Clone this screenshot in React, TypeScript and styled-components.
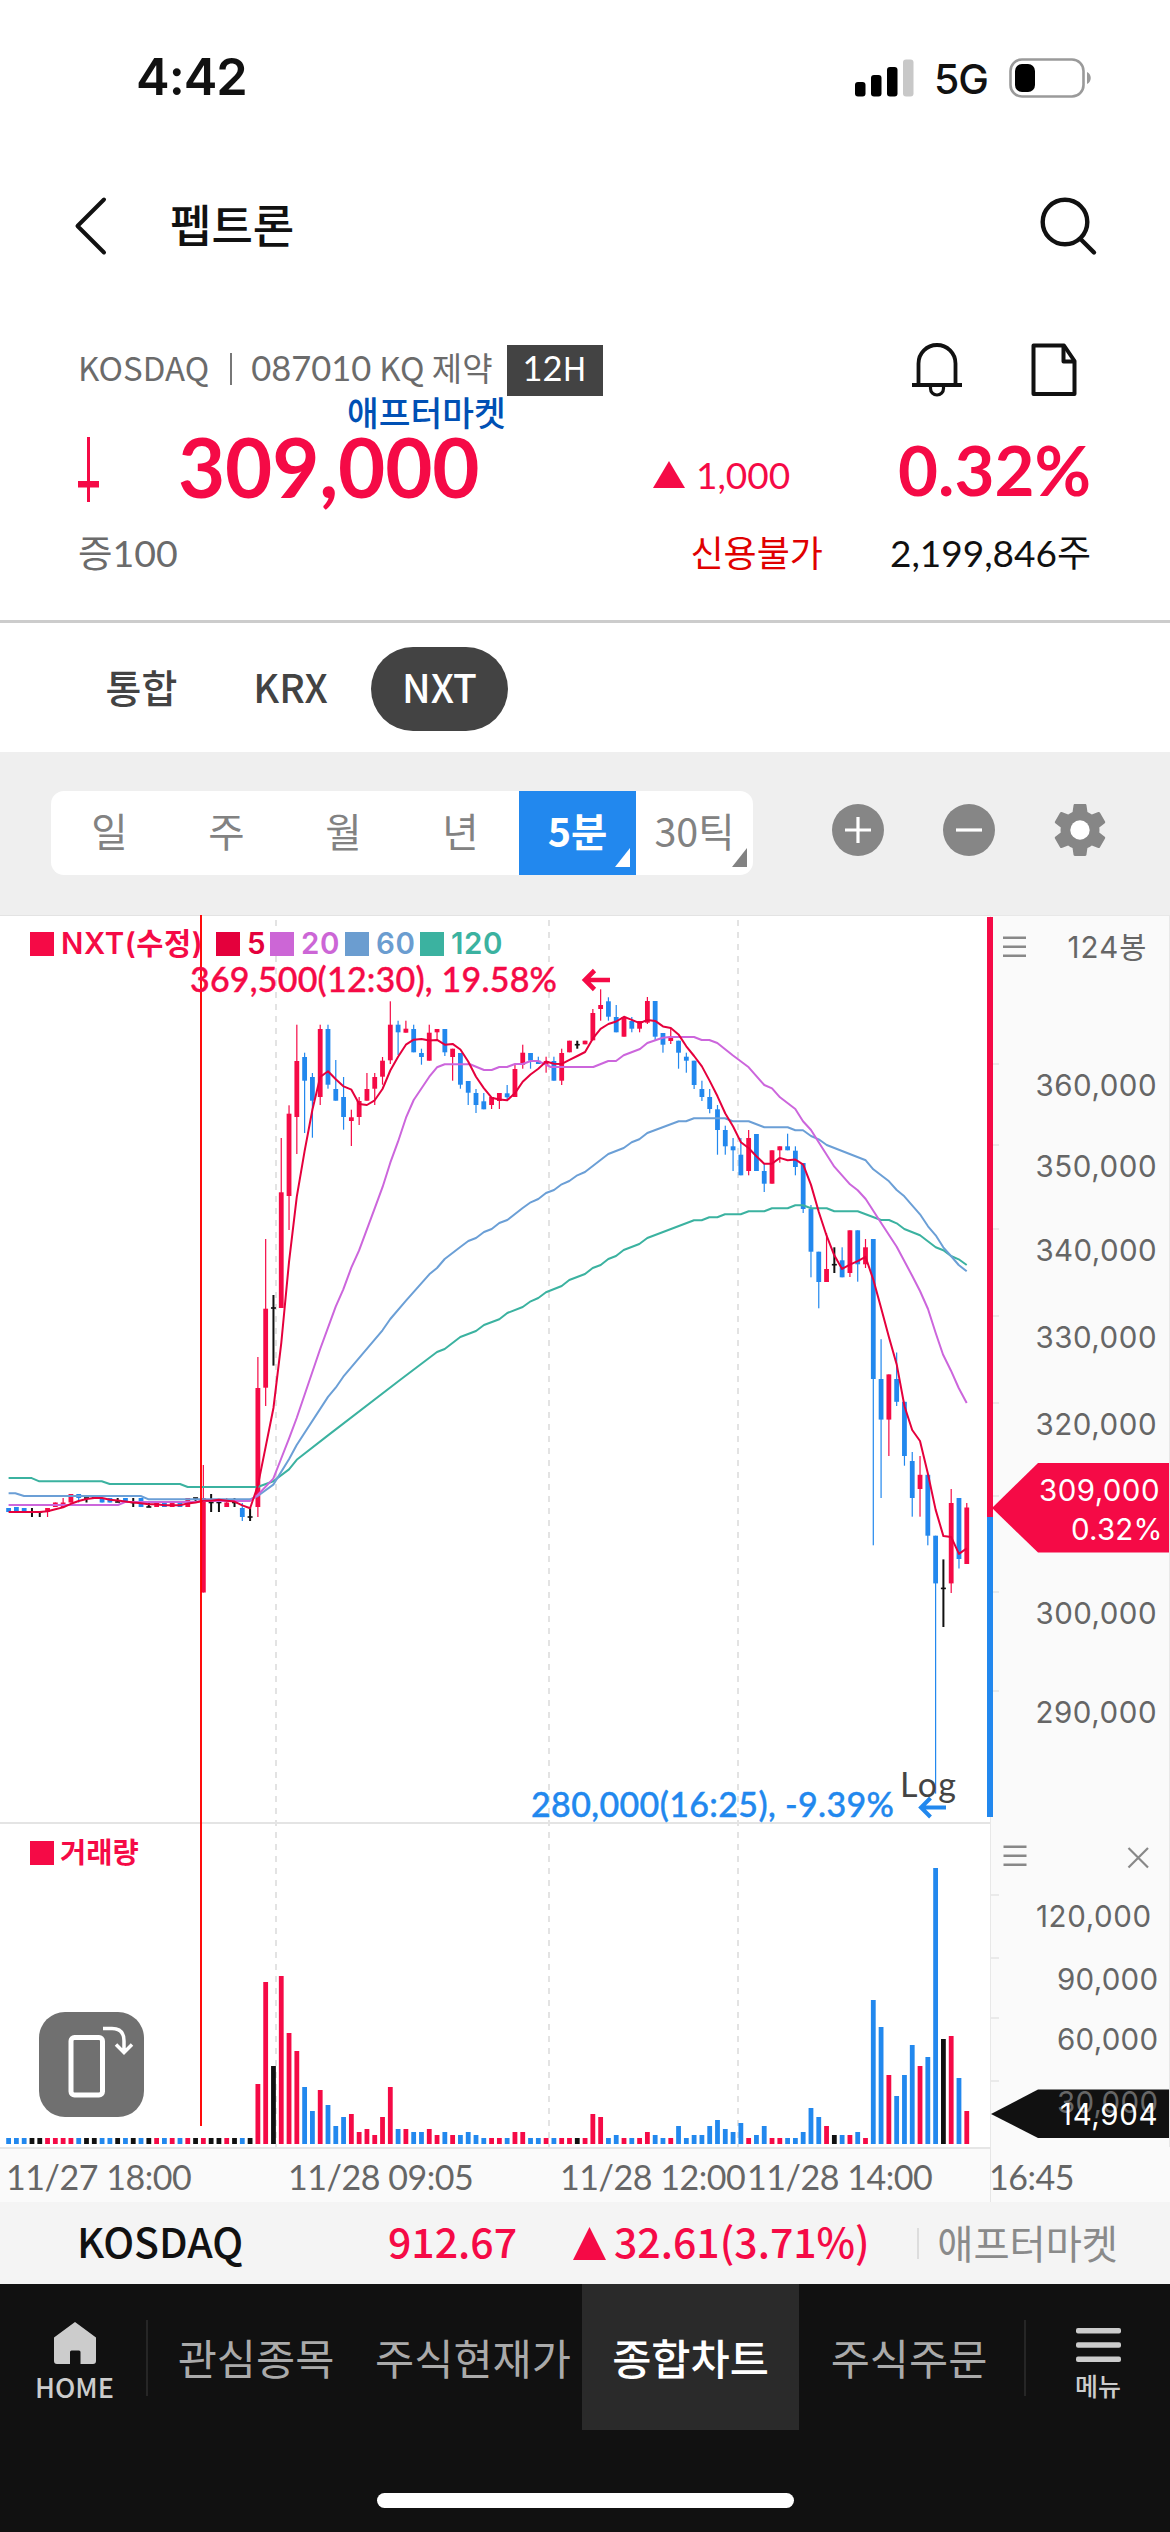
import React from "react";
import styled, { createGlobalStyle } from "styled-components";

const RED = "#f50a46";
const BLUE = "#2288ee";
const BLACK = "#111111";
const LATO = `Lato, "Noto Sans CJK KR", sans-serif`;
const NOTO = `"Noto Sans CJK KR", sans-serif`;
const INTER = `Inter, "Noto Sans CJK KR", sans-serif`;

const GlobalStyle = createGlobalStyle`
  * { box-sizing: border-box; }
  html, body { margin: 0; padding: 0; background: #fff; }
  body { font-family: ${LATO}; color: #111; line-height: 1; width: 1170px; }
  svg { display: block; flex: none; }
`;

const Screen = styled.div`
  width: 1170px;
  height: 2532px;
  display: flex;
  flex-direction: column;
  overflow: hidden;
  background: #fff;
  white-space: nowrap;
`;

/* ---------- status bar ---------- */
const StatusBar = styled.div`
  height: 155px;
  flex: none;
  display: flex;
  align-items: center;
  padding: 0 78px 0 136px;
  font-family: ${INTER};
`;
const Clock = styled.span`
  font-size: 50.5px;
  font-weight: 600;
  letter-spacing: -1px;
  flex: 1;
`;
const Network = styled.span`
  font-size: 41px;
  font-weight: 500;
  margin: 4px 21px 0 20px;
  letter-spacing: -1px;
`;

/* ---------- title bar ---------- */
const TitleBar = styled.div`
  height: 142px;
  flex: none;
  display: flex;
  align-items: center;
  padding: 0 71px 0 71px;
`;
const Title = styled.h1`
  margin: 0 0 0 59px;
  font-size: 45px;
  font-weight: 500;
  flex: 1;
`;

/* ---------- quote ---------- */
const Quote = styled.section`
  height: 326px;
  flex: none;
  padding: 46px 79px 0 78px;
  border-bottom: 3px solid #cccccc;
`;
const InfoRow = styled.div`
  height: 58px;
  display: flex;
  align-items: center;
  padding-bottom: 4px;
`;
const InfoText = styled.div<{ $light?: boolean }>`
  display: flex;
  align-items: baseline;
  font-size: 34.5px;
  padding-bottom: 3px;
  color: ${(p) => (p.$light ? "#fff" : "#6b6b6b")};
`;
const Latin = styled.span<{ $gap?: number }>`
  font-family: ${NOTO};
  font-size: 33px;
  margin-left: ${(p) => p.$gap ?? 0}px;
`;
const InfoBar = styled.i`
  width: 2px;
  height: 32px;
  background: #777;
  margin: 0 19px 0 21px;
  align-self: center;
`;
const SessionBadge = styled.span`
  width: 96px;
  height: 51px;
  margin-left: 14px;
  background: #434343;
  display: flex;
  align-items: center;
  justify-content: center;
`;
const InfoIcons = styled.div`
  display: flex;
  gap: 69px;
  margin-left: auto;
  padding-right: 14px;
`;
const MarketLabel = styled.div`
  height: 27px;
  padding-left: 269px;
  font-size: 34.5px;
  font-weight: 500;
  color: #0050b4;
  line-height: 23px;
`;
const PriceRow = styled.div`
  height: 82px;
  display: flex;
  align-items: center;
`;
const Price = styled.span`
  width: 471px;
  padding-left: 79px;
  padding-bottom: 5px;
  font-size: 81.5px;
  font-weight: 700;
  color: ${RED};
  letter-spacing: -0.2px;
`;
const Change = styled.span`
  flex: 1;
  display: flex;
  align-items: center;
  gap: 11px;
  font-size: 37px;
  color: ${RED};
  padding-top: 11px;
  padding-left: 83px;
`;
const ChangeRate = styled.span`
  font-size: 69px;
  font-weight: 700;
  color: ${RED};
`;
const DetailRow = styled.div`
  display: flex;
  align-items: center;
  height: 85px;
  font-size: 37px;
`;
const Margin = styled.span`
  color: #6b6b6b;
  flex: 1;
  font-size: 37.5px;
`;
const Credit = styled.span`
  color: #e00000;
  margin-right: 67px;
  font-size: 36px;
`;

/* ---------- exchange tabs ---------- */
const ExchangeTabs = styled.div`
  height: 129px;
  flex: none;
  display: flex;
  align-items: center;
  padding: 3px 0 0 73px;
`;
const ExchangeTab = styled.span<{ $w: number; $on?: boolean }>`
  width: ${(p) => p.$w}px;
  height: 84px;
  padding-bottom: 6px;
  border-radius: 42px;
  display: flex;
  align-items: center;
  justify-content: center;
  font-family: ${NOTO};
  font-size: 39px;
  font-weight: 500;
  background: ${(p) => (p.$on ? "#434343" : "transparent")};
  color: ${(p) => (p.$on ? "#fff" : "#434343")};
`;

/* ---------- period toolbar ---------- */
const PeriodBar = styled.div`
  height: 163px;
  flex: none;
  display: flex;
  align-items: center;
  background: #efefef;
  padding-left: 51px;
`;
const Periods = styled.div`
  display: flex;
  height: 84px;
  width: 702px;
  margin-bottom: 1px;
  border-radius: 13px;
  background: #fff;
  overflow: hidden;
`;
const Period = styled.span<{ $on?: boolean }>`
  position: relative;
  width: 117px;
  padding-bottom: 7px;
  display: flex;
  align-items: center;
  justify-content: center;
  font-family: ${NOTO};
  font-size: 39.5px;
  font-weight: ${(p) => (p.$on ? 700 : 400)};
  background: ${(p) => (p.$on ? BLUE : "transparent")};
  color: ${(p) => (p.$on ? "#fff" : "#828282")};
`;
const Corner = styled.i<{ $on?: boolean }>`
  position: absolute;
  right: 6px;
  bottom: 8px;
  border-style: solid;
  border-width: 0 0 19px 15px;
  border-color: transparent transparent ${(p) => (p.$on ? "#fff" : "#828282")} transparent;
`;
const Tools = styled.div`
  display: flex;
  align-items: center;
  gap: 58.5px;
  margin-left: 79px;
  padding-bottom: 7px;
`;

/* ---------- chart ---------- */
const ChartGrid = styled.div`
  position: relative;
  display: grid;
  grid-template-columns: 990px 180px;
  grid-template-rows: 1232px 55px;
  flex: none;
`;
const AxisCell = styled.div`
  background: #fafafa;
`;
const TimeCell = styled.div<{ $edge?: boolean }>`
  background: #fafafa;
  border-top: ${(p) => (p.$edge ? "none" : "2px solid #e6e6e6")};
  border-left: ${(p) => (p.$edge ? "1px solid #e6e6e6" : "none")};
  display: flex;
  padding-top: ${(p) => (p.$edge ? 13 : 11)}px;
  padding-left: ${(p) => (p.$edge ? 0 : 6)}px;
  font-size: 34px;
  color: #666;
`;
const TimeLabel = styled.span<{ $w?: number }>`
  width: ${(p) => (p.$w ? p.$w + "px" : "auto")};
  letter-spacing: -0.45px;
  margin-left: ${(p) => (p.$w ? 0 : -2)}px;
`;
const Legend = styled.div<{ $top: number; $size?: number }>`
  position: absolute;
  left: 30px;
  top: ${(p) => p.$top}px;
  height: 28px;
  display: flex;
  align-items: center;
  font-family: ${INTER};
  font-size: ${(p) => p.$size ?? 29.5}px;
  font-weight: 600;
  letter-spacing: ${(p) => (p.$size ? 0 : 0.6)}px;
`;
const LegendItem = styled.span<{ $color: string; $w: number; $gap?: number }>`
  display: flex;
  align-items: center;
  width: ${(p) => p.$w}px;
  color: ${(p) => p.$color};
  &::before {
    content: "";
    width: 24px;
    height: 24px;
    margin-right: ${(p) => p.$gap ?? 7}px;
    background: ${(p) => p.$color};
    flex: none;
  }
`;
const RotateButton = styled.div`
  position: absolute;
  left: 39px;
  top: 1097px;
  width: 105px;
  height: 105px;
  border-radius: 26px;
  background: #707070;
`;

/* ---------- index ticker ---------- */
const Ticker = styled.div`
  height: 82px;
  flex: none;
  display: flex;
  align-items: center;
  background: #f4f4f4;
  padding-left: 77px;
  font-family: ${NOTO};
  font-size: 41px;
  font-weight: 500;
`;
const TickerName = styled.span`
  width: 311px;
  padding-bottom: 6px;
`;
const TickerValue = styled.span<{ $w?: number; $gap?: number }>`
  width: ${(p) => (p.$w ? p.$w + "px" : "auto")};
  margin-left: ${(p) => p.$gap ?? 0}px;
  padding-bottom: 6px;
  color: ${RED};
`;
const TickerSession = styled.span`
  margin-left: auto;
  margin-right: 52px;
  padding-left: 18px;
  border-left: 2px solid #dddddd;
  height: 31px;
  line-height: 31px;
  font-family: ${LATO};
  font-size: 39.3px;
  font-weight: 400;
  color: #8a8a8a;
`;

/* ---------- bottom navigation ---------- */
const BottomNav = styled.nav`
  height: 248px;
  flex: none;
  background: #111;
  display: flex;
  flex-direction: column;
  align-items: center;
`;
const NavRow = styled.div`
  width: 1170px;
  height: 146px;
  display: flex;
  align-items: stretch;
`;
const NavSide = styled.div<{ $w: number; $size: number; $shift?: number }>`
  width: ${(p) => p.$w}px;
  display: flex;
  flex-direction: column;
  align-items: center;
  justify-content: flex-start;
  padding-top: 38px;
  padding-left: ${(p) => p.$shift ?? 0}px;
  gap: 9px;
  font-family: ${NOTO};
  font-size: ${(p) => p.$size}px;
  font-weight: 500;
  color: #cccccc;
`;
const NavRule = styled.i<{ $gap?: number }>`
  width: 2px;
  height: 76px;
  margin-top: 36px;
  margin-left: ${(p) => p.$gap ?? 0}px;
  background: #262626;
`;
const NavItem = styled.span<{ $w: number; $on?: boolean }>`
  width: ${(p) => p.$w}px;
  display: flex;
  align-items: center;
  justify-content: center;
  padding-top: 5px;
  font-size: 42.6px;
  font-weight: ${(p) => (p.$on ? 500 : 400)};
  color: ${(p) => (p.$on ? "#fff" : "#aaaaaa")};
  background: ${(p) => (p.$on ? "#2a2a2a" : "transparent")};
`;
const HomeIndicator = styled.i`
  width: 417px;
  height: 15px;
  margin-top: 63px;
  border-radius: 8px;
  background: #fff;
`;

/* ---------- chart data ---------- */
// kind, high, body top, body bottom, low (chart coordinates), volume height
type Bar = [string, number, number, number, number, number];
const bars: Bar[] = [
  ["b", 1508, 1508, 1512, 1512, 6], ["b", 1507, 1507, 1512, 1512, 6], ["b", 1508, 1508, 1512, 1512, 6],
  ["k", 1508, 1512, 1512, 1517, 6], ["k", 1512, 1512, 1512, 1517, 6], ["r", 1508, 1508, 1512, 1517, 6],
  ["r", 1502.5, 1502.5, 1507, 1507, 6], ["r", 1498, 1502.5, 1507, 1507, 6], ["r", 1494, 1494, 1502.5, 1502.5, 6],
  ["b", 1494, 1494, 1498, 1502.5, 6], ["k", 1498, 1498, 1498, 1502.5, 6], ["k", 1498, 1498, 1498, 1498, 6],
  ["b", 1498, 1498, 1502.5, 1502.5, 6], ["b", 1498, 1498, 1502.5, 1502.5, 6], ["k", 1498, 1502, 1502, 1502, 6],
  ["b", 1498, 1498, 1502.5, 1502.5, 6], ["k", 1498, 1502.5, 1502.5, 1507, 6], ["b", 1498, 1498, 1507, 1507, 6],
  ["k", 1502.5, 1507, 1507, 1507, 6], ["r", 1502.5, 1502.5, 1507, 1507, 6], ["b", 1502.5, 1502.5, 1507, 1507, 6],
  ["r", 1502.5, 1502.5, 1507, 1507, 6], ["b", 1502.5, 1502.5, 1507, 1507, 6], ["r", 1498, 1498, 1507, 1507, 6],
  ["k", 1498, 1498, 1498, 1502.5, 6], ["r", 1465, 1498, 1592.5, 1592.5, 6], ["k", 1494, 1502.5, 1502.5, 1512, 6],
  ["k", 1502.5, 1502.5, 1502.5, 1512, 6], ["r", 1498, 1502.5, 1507, 1507, 6], ["k", 1498, 1502.5, 1502.5, 1507, 6],
  ["b", 1503, 1508, 1517, 1521, 6], ["k", 1508, 1517, 1517, 1521, 6], ["r", 1357, 1388, 1507, 1517, 60],
  ["r", 1239, 1308.7, 1387.7, 1406, 162], ["k", 1295, 1308, 1308, 1365.6, 78], ["r", 1138, 1192.3, 1308, 1308, 168],
  ["r", 1105.3, 1113.7, 1196, 1230, 111], ["r", 1024.7, 1061, 1117, 1154, 93], ["b", 1052.7, 1057, 1080.7, 1133, 57],
  ["b", 1073, 1077, 1100.7, 1137.7, 33], ["r", 1024.7, 1029, 1097, 1105, 54], ["b", 1024.7, 1029, 1084.7, 1088.7, 39],
  ["b", 1060, 1089, 1100.7, 1100.7, 18], ["b", 1077, 1097, 1117, 1129.7, 27], ["r", 1109.7, 1117.3, 1121, 1146, 30],
  ["r", 1097, 1101, 1117, 1125, 12], ["r", 1073, 1089, 1100.7, 1100.7, 15], ["r", 1073, 1077, 1088.7, 1105, 9],
  ["r", 1057, 1060.7, 1076.7, 1084.7, 27], ["r", 1001.3, 1024.7, 1060.3, 1064, 57], ["b", 1020.7, 1024.7, 1032.3, 1055, 15],
  ["r", 1020.7, 1028.7, 1032.7, 1032.7, 15], ["b", 1024.7, 1029, 1052.3, 1052.3, 12], ["b", 1048.7, 1053, 1057, 1064.7, 12],
  ["r", 1024.7, 1032.7, 1060.7, 1060.7, 15], ["r", 1029, 1029, 1032.3, 1040.7, 9], ["b", 1029, 1029, 1052.3, 1056, 12],
  ["r", 1048.7, 1048.7, 1057, 1080.7, 9], ["b", 1053, 1053, 1084.7, 1088.7, 9], ["b", 1081, 1081, 1092.7, 1105, 12],
  ["b", 1089, 1093, 1105, 1113, 9], ["b", 1093, 1101.3, 1109.3, 1109.3, 6], ["r", 1097, 1097, 1105, 1109, 6],
  ["r", 1093, 1093, 1101, 1109, 6], ["b", 1085, 1093.3, 1097.3, 1100, 6], ["r", 1065, 1069, 1097, 1097, 12],
  ["r", 1044.7, 1052.7, 1064.7, 1068.7, 12], ["b", 1053, 1053, 1060.7, 1068.7, 6], ["b", 1056.7, 1060.7, 1064, 1064, 6],
  ["r", 1056.7, 1061, 1064.7, 1072.7, 6], ["b", 1056.7, 1061, 1080.7, 1080.7, 6], ["r", 1048.7, 1053, 1080.7, 1085, 6],
  ["r", 1040.7, 1040.7, 1052.3, 1052.3, 6], ["k", 1040.7, 1044.7, 1044.7, 1048.7, 6], ["r", 1040.7, 1040.7, 1044.3, 1044.3, 6],
  ["r", 1009, 1013, 1040.3, 1040.3, 30], ["r", 989.3, 1005, 1009, 1020.7, 27], ["b", 997.3, 1001.3, 1016.7, 1020.7, 6],
  ["b", 1005, 1017, 1032.3, 1032.3, 9], ["r", 1017, 1017, 1036.7, 1036.7, 6], ["b", 1017, 1021, 1028.7, 1032.3, 6],
  ["r", 1021, 1021, 1028.7, 1032.3, 6], ["r", 997, 1001, 1022.7, 1024, 12], ["b", 1001, 1001, 1036.7, 1040.7, 9],
  ["b", 1033, 1033, 1044.7, 1052.7, 6], ["r", 1029, 1036.7, 1041, 1044, 6], ["b", 1040.7, 1040.7, 1052.7, 1068.7, 18],
  ["b", 1052.7, 1056.7, 1060.7, 1072.7, 6], ["b", 1060.7, 1060.7, 1085, 1089, 9], ["b", 1080.7, 1089, 1097, 1101, 9],
  ["b", 1089, 1097, 1109, 1113.3, 18], ["b", 1105, 1109.3, 1130, 1154.7, 24], ["b", 1125.7, 1130, 1146.3, 1154.7, 15],
  ["b", 1138, 1146.3, 1150.3, 1171, 12], ["b", 1138, 1154.7, 1175.3, 1175.3, 21], ["r", 1130, 1138, 1171, 1175.3, 6],
  ["b", 1134, 1134, 1171, 1171, 9], ["b", 1163.3, 1171, 1183.7, 1192, 18], ["r", 1150.3, 1150.3, 1183.7, 1183.7, 6],
  ["r", 1146.3, 1146.3, 1150.3, 1162.7, 6], ["b", 1133.7, 1146.3, 1150.3, 1150.3, 6], ["b", 1146.3, 1150.7, 1167, 1175.3, 6],
  ["b", 1163, 1163, 1209, 1213, 12], ["b", 1205, 1209, 1251.7, 1277.3, 36], ["b", 1251.7, 1251.7, 1282, 1308.3, 27],
  ["r", 1233, 1269, 1282, 1282, 18], ["k", 1247.3, 1264.7, 1264.7, 1273, 9], ["b", 1247.3, 1260.3, 1277.3, 1277.3, 9],
  ["r", 1230.3, 1230.3, 1273, 1277, 9], ["b", 1230.3, 1230.3, 1264.3, 1281.7, 12], ["r", 1239, 1247.3, 1264.3, 1268, 6],
  ["b", 1239, 1239, 1379, 1545.3, 144], ["b", 1339.2, 1379, 1419.6, 1498, 117], ["r", 1374.4, 1374.4, 1419.6, 1456, 69],
  ["b", 1352.5, 1379, 1401.8, 1406, 48], ["b", 1401.8, 1401.8, 1456, 1465.7, 69], ["b", 1452, 1461, 1498, 1516.7, 99],
  ["r", 1456, 1474.8, 1489, 1516.7, 78], ["b", 1474.8, 1474.8, 1535.7, 1545.3, 87], ["b", 1535.7, 1535.7, 1583.4, 1793.6, 276],
  ["k", 1559.4, 1588.4, 1588.4, 1627, 105], ["r", 1489, 1503, 1583.4, 1593, 108], ["b", 1498, 1498, 1559, 1568.5, 66],
  ["r", 1503, 1507.5, 1564, 1564, 33],
];
const ink: Record<string, string> = { r: RED, b: BLUE, k: BLACK };
const barX = (i: number) => 8.6 + i * 7.79;

const closes = bars.map((b) => (b[0] === "b" ? b[3] : b[2]));
const ma5 = closes
  .map((_, i) => {
    const part = closes.slice(Math.max(0, i - 4), i + 1);
    return `${barX(i).toFixed(1)},${(part.reduce((a, c) => a + c, 0) / part.length).toFixed(1)}`;
  })
  .join(" ");
const ma20 =
  "8.6,1505 118,1505 125,1502 195,1502 203,1501 250,1501 257.7,1495 273.3,1478.6 281,1459 289,1438.6 296.7,1418 312,1373 320,1349.5 335.7,1306.7 343.3,1289.3 351.3,1267.7 359,1250.7 374.7,1208.3 382.7,1186.7 390.3,1162.7 398,1141.7 406,1117.7 413.7,1100 429.3,1076.7 437,1067.3 444.7,1064.3 470,1064.3 484,1070 491.7,1070 499.3,1067 507,1067 515,1064 522.7,1064 530.7,1061 538,1061 546,1064.7 550.7,1067 593.3,1067 608.3,1061 616,1061 623.7,1055.3 640,1049 647.3,1043 662.7,1037.7 670,1037 694,1037 701.7,1040 709.3,1040 717.3,1043 732.7,1055.3 748.7,1067.3 764.3,1085 772,1088.3 780,1097.3 795.3,1109 803,1121.3 811,1130 818.7,1142.3 834.3,1166.7 850,1184.3 857.7,1190.3 865.7,1199 881,1222.7 896.7,1246.7 912.3,1276 920,1291 928,1309 935.7,1333 943,1354.5 951,1370.7 958.7,1388 966.7,1403";
const ma60 =
  "8.6,1493.3 15.3,1493.3 24,1496 140.7,1496 148.7,1499.3 250,1499.3 257.7,1496 273.3,1484.6 289,1459.3 296.7,1445 328,1396.9 335.7,1387.7 343.3,1376.7 382.5,1330.3 390.3,1319 406,1300.7 429.3,1274.3 437,1268 444.7,1259 460.3,1247 468.3,1241 476,1238 484,1232 491.7,1229 499.3,1223 507.3,1220 522.7,1208 530.7,1202.3 538.3,1199 546,1193 554,1190 561.7,1184.3 569.3,1181 577.3,1175.3 585,1172 608.3,1154 623.7,1148 631.7,1142.3 639.3,1139.3 647.3,1133 678.7,1121.3 686,1121.3 694,1118.3 725,1118.3 732.7,1121.3 748.7,1121.3 764.3,1127.3 787.7,1127.3 795.3,1130.3 803,1130.3 811,1136 818.7,1139.3 826.7,1145 865.7,1160.3 873.3,1169.3 889,1181.3 896.7,1190 904.3,1196.3 920,1214.3 928,1226.3 935.7,1235.3 943.3,1247.3 951,1256 958.7,1265 966.7,1271.3";
const ma120 =
  "8.6,1478.1 31.7,1478.1 39.3,1481.3 101.7,1481.3 109.7,1484 180,1484 187.7,1487 257.7,1487 273.3,1481.3 289,1469.4 296.7,1459.8 328,1435.4 400,1380 437,1352 444.7,1349 460.3,1337 476,1331 484,1325 499.3,1319.3 507.3,1313 522.7,1307 530.7,1301.3 538.3,1298 546,1292.3 561.7,1286 569.3,1280 585,1274 592.7,1268 600.7,1265 608.3,1259 616,1256 623.7,1250 639.3,1244 647.3,1238 694,1220.3 701.7,1220.3 709.3,1217.3 717.3,1217.3 725,1214.3 740.7,1214.3 748.7,1211.3 764.3,1211.3 772,1208.3 787.7,1208.3 795.3,1205.3 803,1205.3 811,1208.3 826.7,1208.3 834.3,1211.3 857.7,1211.3 881,1220 889,1220 896.7,1223.3 904.3,1229 920,1235.3 935.7,1247.3 943.3,1250.3 951,1256 958.7,1259.3 966.7,1265";

const priceTicks: [number, string][] = [
  [1064, "360,000"], [1145, "350,000"], [1229, "340,000"], [1316, "330,000"],
  [1403, "320,000"], [1496, ""], [1592, "300,000"], [1691, "290,000"],
];
const volumeTicks: [number, string, number, number][] = [
  [1895, "120,000", 1036, 114], [1958, "90,000", 1057, 100], [2018, "60,000", 1057, 100], [2081, "30,000", 1057, 100],
];

/* ---------- icons ---------- */
const SignalIcon = () => (
  <svg width="59" height="38" viewBox="0 0 59 38">
    <rect x="0" y="23" width="10.5" height="14.5" rx="3" />
    <rect x="16" y="16" width="10.5" height="21.5" rx="3" />
    <rect x="32" y="8" width="10.5" height="29.5" rx="3" />
    <rect x="48" y="0.5" width="10.5" height="37" rx="3" fill="#c8c8c8" />
  </svg>
);
const BatteryIcon = () => (
  <svg width="83" height="40" viewBox="0 0 83 40">
    <rect x="1.5" y="1.5" width="73" height="37" rx="11.5" fill="none" stroke="#9a9a9a" strokeWidth="2.6" />
    <rect x="6" y="6" width="20" height="28" rx="7" />
    <path d="M78 14c5 2 5 10 0 12z" fill="#9a9a9a" />
  </svg>
);
const BackIcon = () => (
  <svg width="40" height="60" viewBox="0 0 40 60" fill="none" stroke="#111" strokeWidth="4" strokeLinecap="round" strokeLinejoin="round">
    <path d="M33 3.500L6.500 30L33 56.500" />
  </svg>
);
const SearchIcon = () => (
  <svg width="60" height="62" viewBox="0 0 60 62" fill="none" stroke="#111" strokeWidth="4.4" strokeLinecap="round">
    <circle cx="26" cy="27" r="22.3" />
    <path d="M41.5 44L55 57.5" />
  </svg>
);
const BellIcon = () => (
  <svg width="50" height="54" viewBox="0 0 50 54" fill="none" stroke="#111" strokeWidth="3.8">
    <path d="M6.5 41V20.5a18.5 18.5 0 0 1 37 0V41" />
    <path d="M0 42h50" strokeWidth="4" />
    <path d="M18.5 43v2.500a6.500 6.500 0 0 0 13 0V43" strokeWidth="3.2" />
  </svg>
);
const NoteIcon = () => (
  <svg width="46" height="54" viewBox="0 0 46 54" fill="none" stroke="#111" strokeWidth="4" strokeLinejoin="round">
    <path d="M2.500 2.500H33L43.500 18V51H2.500z" />
    <path d="M32.500 3V18.500H43.500" />
  </svg>
);
const CandleIcon = () => (
  <svg width="21" height="65" viewBox="0 0 21 65" fill={RED}>
    <rect x="9" width="3" height="65" />
    <rect y="44" width="21" height="6.500" />
  </svg>
);
const UpIcon = ({ w, h }: { w: number; h: number }) => (
  <svg width={w} height={h} viewBox="0 0 32 27" preserveAspectRatio="none">
    <path d="M16 0L32 27H0z" fill={RED} />
  </svg>
);
const ZoomIcon = ({ plus }: { plus?: boolean }) => (
  <svg width="52" height="52" viewBox="0 0 52 52">
    <circle cx="26" cy="26" r="26" fill="#868686" />
    <path d={plus ? "M13 26H39M26 13V39" : "M13 26H39"} stroke="#fff" strokeWidth="3.2" />
  </svg>
);
const GearIcon = () => (
  <svg width="54" height="54" viewBox="2.200 2 19.600 20" fill="#868686">
    <path d="M19.140 12.940c.040-.300.060-.610.060-.940 0-.320-.020-.640-.070-.940l2.030-1.580c.180-.140.230-.410.120-.610l-1.920-3.320c-.120-.220-.370-.290-.590-.220l-2.390.960c-.500-.380-1.030-.700-1.620-.940L14.400 2.810c-.040-.240-.240-.410-.480-.410h-3.840c-.240 0-.430.170-.470.410L9.250 5.350C8.660 5.590 8.120 5.920 7.630 6.290L5.240 5.330c-.220-.080-.470 0-.590.220L2.740 8.870C2.620 9.080 2.660 9.340 2.860 9.480l2.030 1.580C4.840 11.360 4.800 11.690 4.800 12s.020.640.070.940l-2.030 1.580c-.180.140-.230.410-.120.610l1.920 3.320c.120.220.370.290.590.220l2.390-.960c.500.380 1.030.700 1.620.940l.360 2.540c.050.240.240.410.480.410h3.840c.240 0 .440-.170.470-.410l.360-2.540c.590-.240 1.130-.560 1.620-.940l2.390.960c.220.080.470 0 .590-.220l1.920-3.320c.120-.220.070-.470-.120-.610z" />
    <circle cx="12" cy="12" r="3.600" fill="#fff" />
  </svg>
);
const RotateIcon = () => (
  <svg width="105" height="105" viewBox="39 2012 105 105" fill="none" stroke="#fff">
    <rect x="71" y="2037.500" width="31.500" height="57.500" rx="3.500" strokeWidth="5" />
    <path d="M103 2028.500H112C120 2028.500 124 2033 124 2041V2052M116 2044.500L124 2052.500L132 2044.500" strokeWidth="3.500" />
  </svg>
);
const HomeIcon = () => (
  <svg width="42" height="42" viewBox="0 0 42 42" fill="#ccc">
    <path d="M21 0L42 15.500V39a3 3 0 0 1-3 3H26.500V30a1.500 1.500 0 0 0-1.500-1.500H17.500A1.500 1.500 0 0 0 16 30V42H3a3 3 0 0 1-3-3V15.500z" />
  </svg>
);
const MenuIcon = () => (
  <svg width="45" height="42" viewBox="0 0 45 42" fill="#ccc">
    <rect y="6" width="45" height="5.500" rx="2" />
    <rect y="20.300" width="45" height="5.500" rx="2" />
    <rect y="34.600" width="45" height="5.500" rx="2" />
  </svg>
);

/* ---------- chart drawing ---------- */
const Plot = () => (
  <svg width="990" height="1232" viewBox="0 915 990 1232">
    <path d="M0 915.500H990" stroke="#e3e3e3" strokeWidth="1" />
    <path d="M276 920V2147M549 920V2147M738 920V2147" stroke="#e3e3e3" strokeWidth="2" strokeDasharray="6 6" />
    <path d="M0 1823H990" stroke="#e4e4e4" strokeWidth="2" />
    {bars.map(([kind, high, top, bottom, low, vol], i) => {
      const x = barX(i);
      const doji = top === bottom;
      return (
        <g key={i} fill={ink[kind]}>
          {low > high && <rect x={x - (doji ? 1 : 0.6)} y={high} width={doji ? 2 : 1.2} height={low - high} />}
          {doji ? (
            <rect x={x - 2.5} y={top - 0.8} width={5} height={1.6} />
          ) : (
            <rect x={x - 2.4} y={top} width={4.8} height={bottom - top} />
          )}
          <rect x={x - 2.4} y={2144 - vol} width={4.8} height={vol} />
        </g>
      );
    })}
    <g fill="none" strokeWidth="2" strokeLinejoin="round">
      <polyline points={ma120} stroke="#3bb2a0" />
      <polyline points={ma60} stroke="#6b9fd6" />
      <polyline points={ma20} stroke="#cc66dc" />
      <polyline points={ma5} stroke="#e5003c" />
    </g>
    <path d="M201 915V2126" stroke="#ff0000" strokeWidth="1.900" />
    <g fontFamily={LATO} fontSize="34" fontWeight="500">
      <text x="190" y="991.500" fill={RED} stroke={RED} strokeWidth="0.400" textLength="367">369,500(12:30), 19.58%</text>
      <text x="531" y="1816.500" fill={BLUE} stroke={BLUE} strokeWidth="0.400" textLength="363">280,000(16:25), -9.39%</text>
      <text x="900" y="1796.500" fill="#444" fontWeight="400" textLength="56">Log</text>
    </g>
    <path d="M610 980H586M594.500 970.500L585 980L594.500 989.500" fill="none" stroke={RED} strokeWidth="4.600" />
    <path d="M946 1807.500H922M930.500 1798L921 1807.500L930.500 1817" fill="none" stroke={BLUE} strokeWidth="4" />
    <rect x="987" y="917" width="3" height="600" fill={RED} />
    <rect x="987" y="1517" width="3" height="300" fill={BLUE} />
  </svg>
);
const Axis = () => (
  <svg width="180" height="1232" viewBox="990 915 180 1232" fontFamily={INTER} fontSize="29.500" fill="#666">
    <path d="M990 915.500H1170M1169.500 915V2147M990.500 915V2147" stroke="#e8e8e8" strokeWidth="1" />
    <rect x="990" y="917" width="3" height="600" fill={RED} />
    <rect x="990" y="1517" width="3" height="300" fill={BLUE} />
    {priceTicks.map(([y, label]) => (
      <g key={y}>
        <path d={`M993 ${y}H999`} stroke="#e4e4e4" strokeWidth="1.500" />
        <text x="1035.500" y={y + 32} textLength="121">{label}</text>
      </g>
    ))}
    <path d="M1003 937.700H1026M1003 946.700H1026M1003 955.700H1026" stroke="#888" strokeWidth="2.600" />
    <text x="1067.500" y="958" textLength="79">124봉</text>
    <path d="M1003.500 1846.700H1026.500M1003.500 1855.700H1026.500M1003.500 1864.700H1026.500" stroke="#888" strokeWidth="2.400" />
    <path d="M1128.500 1848L1148 1867.500M1148 1848L1128.500 1867.500" stroke="#888" strokeWidth="2.200" />
    <path d="M992 1508L1038 1463H1169V1552.500H1038z" fill={RED} />
    <text x="1039" y="1501" fill="#fff" textLength="120.500">309,000</text>
    <text x="1071" y="1539.500" fill="#fff" textLength="91.500">0.32%</text>
    <path d="M991 2114L1038 2089.500H1169V2138H1038z" fill="#111" />
    {volumeTicks.map(([y, label, x, w]) => (
      <g key={y}>
        <path d={`M991 ${y}H999`} stroke="#e4e4e4" strokeWidth="1.500" />
        <text x={x} y={y + 32} textLength={w + 1}>{label}</text>
      </g>
    ))}
    <text x="1060" y="2124.500" fill="#fff" textLength="97.500">14,904</text>
  </svg>
);

export default function App() {
  return (
    <Screen>
      <GlobalStyle />
      <StatusBar>
        <Clock>4:42</Clock>
        <SignalIcon />
        <Network>5G</Network>
        <BatteryIcon />
      </StatusBar>
      <TitleBar>
        <BackIcon />
        <Title>펩트론</Title>
        <SearchIcon />
      </TitleBar>
      <Quote>
        <InfoRow>
          <InfoText>
            <Latin>KOSDAQ</Latin>
            <InfoBar />
            087010
            <Latin $gap={8}>KQ 제약</Latin>
          </InfoText>
          <SessionBadge>
            <InfoText $light>
              12<Latin>H</Latin>
            </InfoText>
          </SessionBadge>
          <InfoIcons>
            <BellIcon />
            <NoteIcon />
          </InfoIcons>
        </InfoRow>
        <MarketLabel>애프터마켓</MarketLabel>
        <PriceRow>
          <CandleIcon />
          <Price>309,000</Price>
          <Change>
            <UpIcon w={32} h={27} />
            1,000
          </Change>
          <ChangeRate>0.32%</ChangeRate>
        </PriceRow>
        <DetailRow>
          <Margin>증100</Margin>
          <Credit>신용불가</Credit>
          <span>2,199,846주</span>
        </DetailRow>
      </Quote>
      <ExchangeTabs>
        <ExchangeTab $w={137}>통합</ExchangeTab>
        <ExchangeTab $w={161}>KRX</ExchangeTab>
        <ExchangeTab $w={137} $on>
          NXT
        </ExchangeTab>
      </ExchangeTabs>
      <PeriodBar>
        <Periods>
          <Period>일</Period>
          <Period>주</Period>
          <Period>월</Period>
          <Period>년</Period>
          <Period $on>
            5분
            <Corner $on />
          </Period>
          <Period>
            30틱
            <Corner />
          </Period>
        </Periods>
        <Tools>
          <ZoomIcon plus />
          <ZoomIcon />
          <GearIcon />
        </Tools>
      </PeriodBar>
      <ChartGrid>
        <Plot />
        <AxisCell>
          <Axis />
        </AxisCell>
        <TimeCell>
          <TimeLabel $w={282}>11/27 18:00</TimeLabel>
          <TimeLabel $w={272}>11/28 09:05</TimeLabel>
          <TimeLabel $w={187}>11/28 12:00</TimeLabel>
          <TimeLabel $w={190}>11/28 14:00</TimeLabel>
        </TimeCell>
        <TimeCell $edge>
          <TimeLabel>16:45</TimeLabel>
        </TimeCell>
        <Legend $top={15}>
          <LegendItem $color={RED} $w={186}>NXT(수정)</LegendItem>
          <LegendItem $color="#e4003c" $w={54}>5</LegendItem>
          <LegendItem $color="#cc66d6" $w={75}>20</LegendItem>
          <LegendItem $color="#6b9dd0" $w={75}>60</LegendItem>
          <LegendItem $color="#3bb2a0" $w={90}>120</LegendItem>
        </Legend>
        <Legend $top={924} $size={28.5}>
          <LegendItem $color={RED} $w={120} $gap={6}>거래량</LegendItem>
        </Legend>
        <RotateButton>
          <RotateIcon />
        </RotateButton>
      </ChartGrid>
      <Ticker>
        <TickerName>KOSDAQ</TickerName>
        <TickerValue $w={185}>912.67</TickerValue>
        <UpIcon w={33} h={33} />
        <TickerValue $gap={8}>32.61(3.71%)</TickerValue>
        <TickerSession>애프터마켓</TickerSession>
      </Ticker>
      <BottomNav>
        <NavRow>
          <NavSide $w={146} $size={27} $shift={3}>
            <HomeIcon />
            HOME
          </NavSide>
          <NavRule />
          <NavItem $w={216}>관심종목</NavItem>
          <NavItem $w={218}>주식현재가</NavItem>
          <NavItem $w={217} $on>
            종합차트
          </NavItem>
          <NavItem $w={220}>주식주문</NavItem>
          <NavRule $gap={5} />
          <NavSide $w={144} $size={25}>
            <MenuIcon />
            메뉴
          </NavSide>
        </NavRow>
        <HomeIndicator />
      </BottomNav>
    </Screen>
  );
}
